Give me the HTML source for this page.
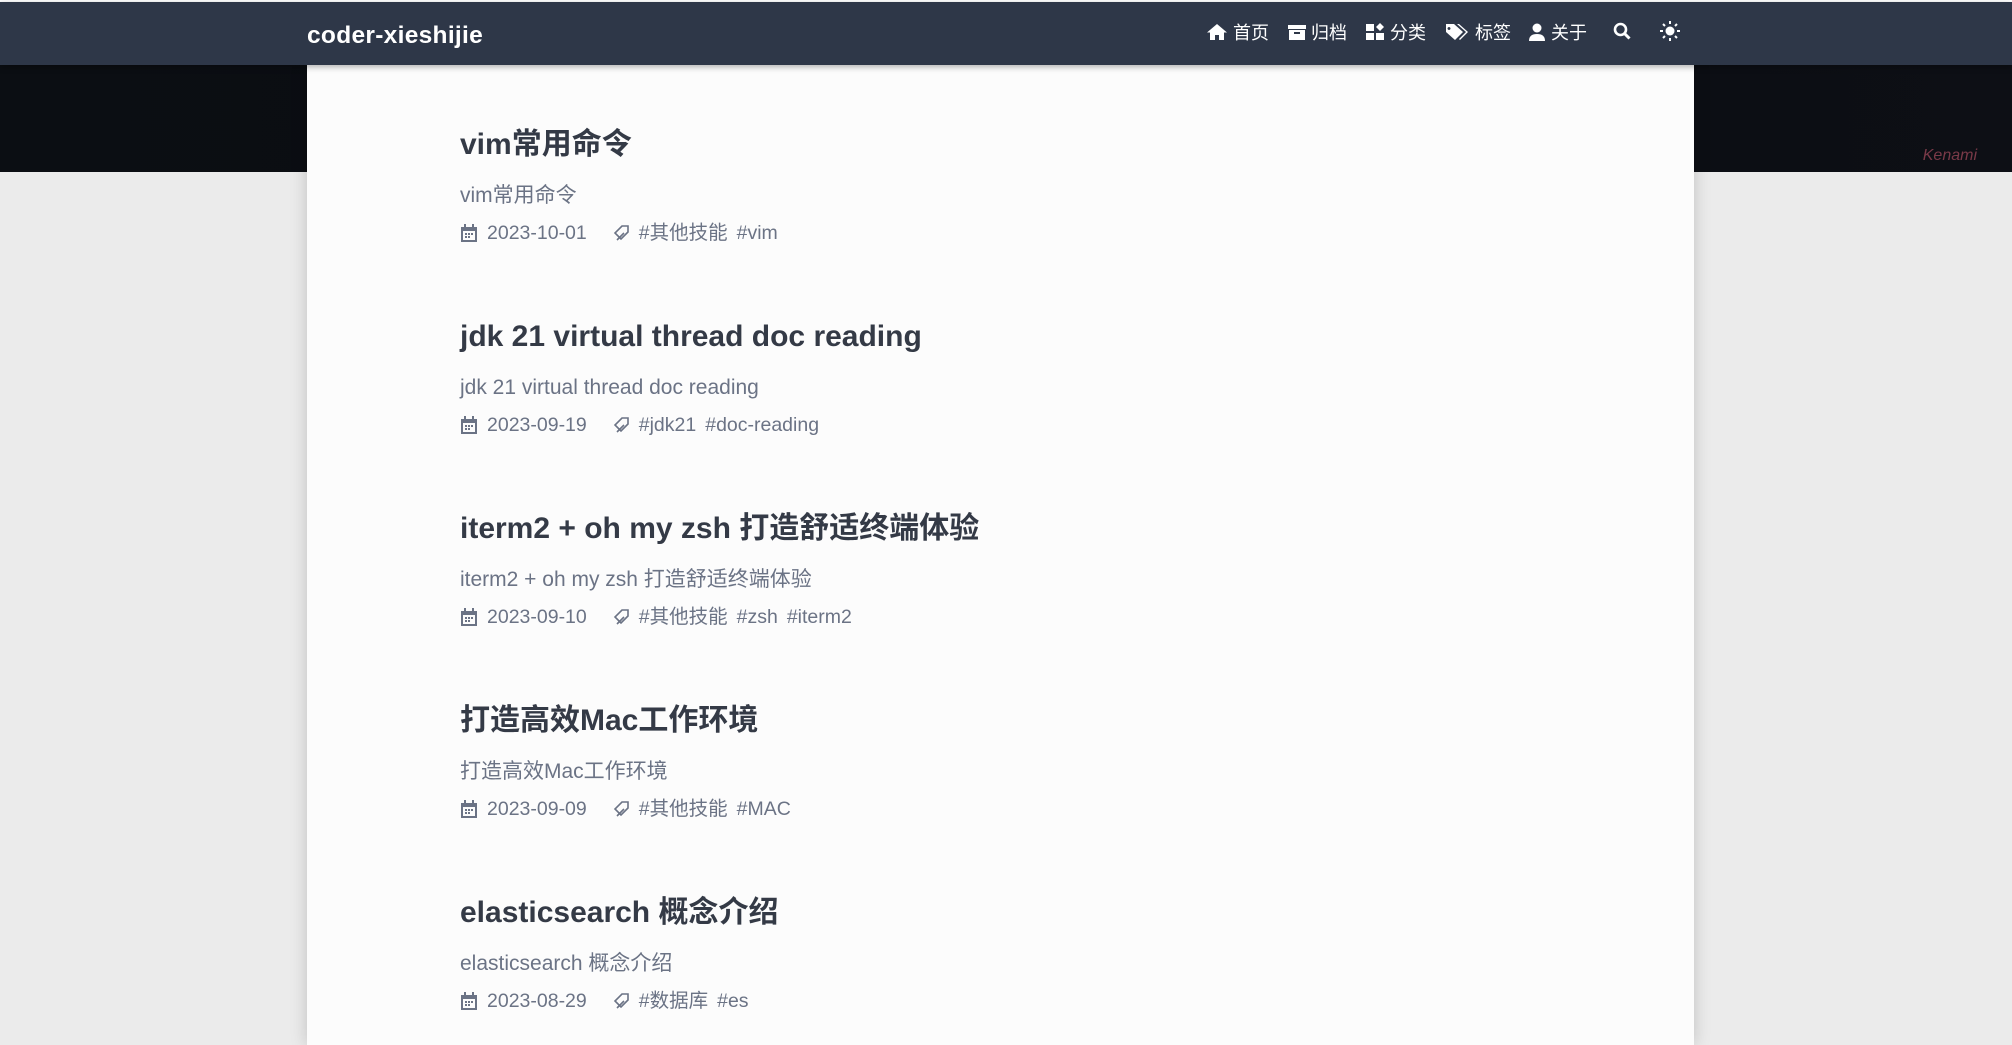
<!DOCTYPE html>
<html><head><meta charset="utf-8">
<style>
*{margin:0;padding:0;box-sizing:border-box}
body{width:2012px;height:1034px;overflow:hidden;background:#ebebeb;font-family:"Liberation Sans","Noto Sans CJK SC",sans-serif;position:relative}
.top{position:absolute;left:0;top:0;width:2012px;height:2px;background:#fff}
.nav{position:absolute;left:0;top:2px;width:2012px;height:63px;background:#2e3748;color:#fff;z-index:3;box-shadow:0 2px 6px rgba(0,0,0,.3)}
.logo{position:absolute;left:307px;top:20px;font-size:24.5px;font-weight:bold;letter-spacing:0.3px}
.ni{position:absolute;top:17px;font-size:18px;display:flex;align-items:center;gap:5px}
.ni svg{fill:#fff}
.banner{position:absolute;left:0;top:65px;width:2012px;height:107px;background:linear-gradient(90deg,#0b0e13,#0a0c11 50%,#0d0f15);}
.card{position:absolute;left:307px;top:65px;width:1387px;height:980px;background:#fcfcfc;box-shadow:0 0 16px rgba(0,0,0,.18);z-index:2}
.post{position:absolute;left:153px}
.t{font-size:30px;line-height:38px;height:38px;font-weight:bold;color:#343a46;white-space:nowrap}
.d{font-size:21px;line-height:26px;height:26px;color:#6b7385;margin-top:19px;white-space:nowrap}
.m{font-size:19.5px;line-height:24px;height:24px;color:#6b7385;margin-top:12px;display:flex;align-items:center;white-space:nowrap}
.m svg{margin-right:9px}
.m svg.tagi{margin:0 9px 0 26px}
.m span.tg{margin-right:9px}
.sig{position:absolute;right:35px;top:82px;color:#7a3a48;font-style:italic;font-size:16px}
</style></head><body>
<div class="top"></div>
<div class="nav">
<div class="logo">coder-xieshijie</div>
<div class="ni" style="left:1206px"><svg width="22" height="18" viewBox="0 0 22 18"><path d="M11 1L1 9.5h3V17h5v-5h4v5h5V9.5h3z"/></svg>首页</div>
<div class="ni" style="left:1288px"><svg width="18" height="18" viewBox="0 0 18 18"><rect x="0" y="2" width="18" height="4"/><path d="M1 7h16v10H1z M6 9v2h6V9z" fill-rule="evenodd"/></svg>归档</div>
<div class="ni" style="left:1366px"><svg width="19" height="18" viewBox="0 0 19 18"><rect x="0" y="1" width="8" height="7"/><rect x="0" y="10" width="8" height="7"/><rect x="10" y="10" width="8" height="7"/><path d="M14 0l4 4-4 4-4-4z"/></svg>分类</div>
<div class="ni" style="left:1446px"><svg width="24" height="18" viewBox="0 0 24 18"><path d="M0 1h8l9 8-8 8-9-8z M3 4a1.5 1.5 0 1 0 0.01 0z" fill-rule="evenodd"/><path d="M11 1h2l9 8-8 8-1-1 7-7z"/></svg>标签</div>
<div class="ni" style="left:1528px"><svg width="18" height="18" viewBox="0 0 18 18"><circle cx="9" cy="5" r="4.5"/><path d="M1 18c0-5 3-7 8-7s8 2 8 7z"/></svg>关于</div>
<div class="ni" style="left:1613px;top:20px"><svg width="18" height="18" viewBox="0 0 18 18"><circle cx="7.5" cy="7.5" r="5.5" fill="none" stroke="#fff" stroke-width="2.6"/><path d="M11.5 11.5l5 5" stroke="#fff" stroke-width="3"/></svg></div>
<div class="ni" style="left:1660px;top:19px"><svg width="20" height="20" viewBox="0 0 20 20"><circle cx="10" cy="10" r="4.5"/><g stroke="#fff" stroke-width="2"><path d="M10 0v3M10 17v3M0 10h3M17 10h3M3 3l2 2M15 15l2 2M17 3l-2 2M5 15l-2 2"/></g></svg></div>
</div>
<div class="banner"><div class="sig">Kenami</div></div>
<div class="card">
<div class="post" style="top:61px"><div class="t">vim常用命令</div><div class="d">vim常用命令</div><div class="m"><svg width="18" height="18" viewBox="0 0 18 18" fill="#6b7385"><path d="M1 3h16v15H1z M3 7v9h12V7z" fill-rule="evenodd"/><rect x="4" y="0" width="2" height="4"/><rect x="12" y="0" width="2" height="4"/><rect x="5" y="9" width="2" height="2"/><rect x="8" y="9" width="2" height="2"/><rect x="11" y="9" width="2" height="2"/><rect x="5" y="12" width="2" height="2"/><rect x="8" y="12" width="2" height="2"/></svg>2023-10-01<svg class="tagi" width="17" height="17" viewBox="0 0 17 17" fill="none" stroke="#6b7385" stroke-width="1.6"><path d="M9 1h6v6l-7 7-6-6z"/><path d="M5 14l-1 1 7-7"/></svg><span class="tg">#其他技能</span><span class="tg">#vim</span></div></div>
<div class="post" style="top:253px"><div class="t">jdk 21 virtual thread doc reading</div><div class="d">jdk 21 virtual thread doc reading</div><div class="m"><svg width="18" height="18" viewBox="0 0 18 18" fill="#6b7385"><path d="M1 3h16v15H1z M3 7v9h12V7z" fill-rule="evenodd"/><rect x="4" y="0" width="2" height="4"/><rect x="12" y="0" width="2" height="4"/><rect x="5" y="9" width="2" height="2"/><rect x="8" y="9" width="2" height="2"/><rect x="11" y="9" width="2" height="2"/><rect x="5" y="12" width="2" height="2"/><rect x="8" y="12" width="2" height="2"/></svg>2023-09-19<svg class="tagi" width="17" height="17" viewBox="0 0 17 17" fill="none" stroke="#6b7385" stroke-width="1.6"><path d="M9 1h6v6l-7 7-6-6z"/><path d="M5 14l-1 1 7-7"/></svg><span class="tg">#jdk21</span><span class="tg">#doc-reading</span></div></div>
<div class="post" style="top:445px"><div class="t">iterm2 + oh my zsh 打造舒适终端体验</div><div class="d">iterm2 + oh my zsh 打造舒适终端体验</div><div class="m"><svg width="18" height="18" viewBox="0 0 18 18" fill="#6b7385"><path d="M1 3h16v15H1z M3 7v9h12V7z" fill-rule="evenodd"/><rect x="4" y="0" width="2" height="4"/><rect x="12" y="0" width="2" height="4"/><rect x="5" y="9" width="2" height="2"/><rect x="8" y="9" width="2" height="2"/><rect x="11" y="9" width="2" height="2"/><rect x="5" y="12" width="2" height="2"/><rect x="8" y="12" width="2" height="2"/></svg>2023-09-10<svg class="tagi" width="17" height="17" viewBox="0 0 17 17" fill="none" stroke="#6b7385" stroke-width="1.6"><path d="M9 1h6v6l-7 7-6-6z"/><path d="M5 14l-1 1 7-7"/></svg><span class="tg">#其他技能</span><span class="tg">#zsh</span><span class="tg">#iterm2</span></div></div>
<div class="post" style="top:637px"><div class="t">打造高效Mac工作环境</div><div class="d">打造高效Mac工作环境</div><div class="m"><svg width="18" height="18" viewBox="0 0 18 18" fill="#6b7385"><path d="M1 3h16v15H1z M3 7v9h12V7z" fill-rule="evenodd"/><rect x="4" y="0" width="2" height="4"/><rect x="12" y="0" width="2" height="4"/><rect x="5" y="9" width="2" height="2"/><rect x="8" y="9" width="2" height="2"/><rect x="11" y="9" width="2" height="2"/><rect x="5" y="12" width="2" height="2"/><rect x="8" y="12" width="2" height="2"/></svg>2023-09-09<svg class="tagi" width="17" height="17" viewBox="0 0 17 17" fill="none" stroke="#6b7385" stroke-width="1.6"><path d="M9 1h6v6l-7 7-6-6z"/><path d="M5 14l-1 1 7-7"/></svg><span class="tg">#其他技能</span><span class="tg">#MAC</span></div></div>
<div class="post" style="top:829px"><div class="t">elasticsearch 概念介绍</div><div class="d">elasticsearch 概念介绍</div><div class="m"><svg width="18" height="18" viewBox="0 0 18 18" fill="#6b7385"><path d="M1 3h16v15H1z M3 7v9h12V7z" fill-rule="evenodd"/><rect x="4" y="0" width="2" height="4"/><rect x="12" y="0" width="2" height="4"/><rect x="5" y="9" width="2" height="2"/><rect x="8" y="9" width="2" height="2"/><rect x="11" y="9" width="2" height="2"/><rect x="5" y="12" width="2" height="2"/><rect x="8" y="12" width="2" height="2"/></svg>2023-08-29<svg class="tagi" width="17" height="17" viewBox="0 0 17 17" fill="none" stroke="#6b7385" stroke-width="1.6"><path d="M9 1h6v6l-7 7-6-6z"/><path d="M5 14l-1 1 7-7"/></svg><span class="tg">#数据库</span><span class="tg">#es</span></div></div>
</div>
</body></html>
